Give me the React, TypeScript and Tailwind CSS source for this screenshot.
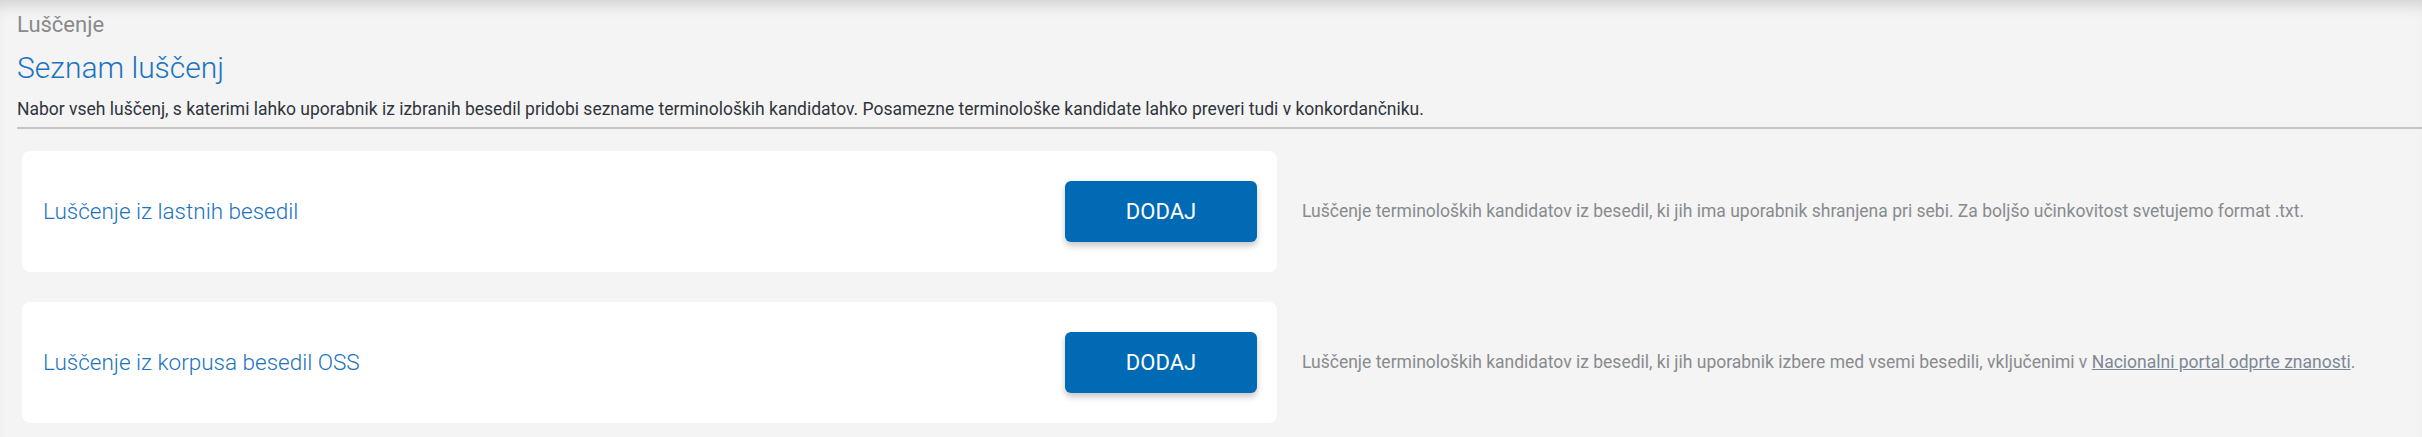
import type { ReactNode } from 'react'

interface ExtractionRowProps {
  title: string
  children: ReactNode
}

function ExtractionRow({ title, children }: ExtractionRowProps) {
  return (
    <div className="flex items-center gap-[25px]">
      <div className="w-[1255px] h-[121px] shrink-0 bg-white rounded-[8px] flex items-center justify-between pl-[21px] pr-[20px]">
        <span className="text-[22.5px] font-light text-[#1a73c1] leading-none">{title}</span>
        <button className="w-[192px] h-[61px] rounded-[6px] bg-[#006ab4] text-white text-[22px] leading-none shadow-[0_4px_6px_rgba(0,0,0,0.22)]">
          DODAJ
        </button>
      </div>
      <p className="text-[17.5px] text-[#888b8e] leading-none whitespace-nowrap">{children}</p>
    </div>
  )
}

export default function App() {
  return (
    <div
      className="min-h-[437px] bg-[#f4f4f4] shadow-[inset_0_14px_16px_-10px_rgba(0,0,0,0.16)] pt-[12px] pb-[14px]"
      style={{ fontFamily: 'Roboto, "Noto Sans", sans-serif' }}
    >
      <div className="pl-[17px]">
        <div className="text-[22px] text-[#8a8a8a] leading-[26px]">Luščenje</div>
        <h1 className="mt-[13px] text-[30px] font-light text-[#1a73c1] leading-[34px]">Seznam luščenj</h1>
        <p className="mt-[13px] text-[17.5px] text-[#2f353b] leading-[22px]">
          Nabor vseh luščenj, s katerimi lahko uporabnik iz izbranih besedil pridobi sezname terminoloških kandidatov. Posamezne terminološke kandidate lahko preveri tudi v konkordančniku.
        </p>
        <div className="mt-[7px] h-[2px] bg-[#c4c4c4]" />
      </div>

      <div className="mt-[22px] pl-[22px] flex flex-col gap-[30px]">
        <ExtractionRow title="Luščenje iz lastnih besedil">
          Luščenje terminoloških kandidatov iz besedil, ki jih ima uporabnik shranjena pri sebi. Za boljšo učinkovitost svetujemo format .txt.
        </ExtractionRow>
        <ExtractionRow title="Luščenje iz korpusa besedil OSS">
          Luščenje terminoloških kandidatov iz besedil, ki jih uporabnik izbere med vsemi besedili, vključenimi v{' '}
          <a href="#" className="underline text-[#7d8894]">Nacionalni portal odprte znanosti</a>.
        </ExtractionRow>
      </div>
    </div>
  )
}
